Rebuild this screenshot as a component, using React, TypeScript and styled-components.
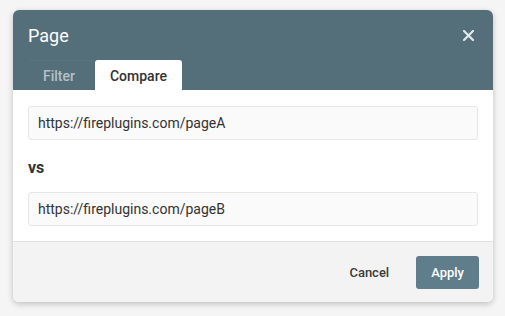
import React from "react";
import styled, { createGlobalStyle } from "styled-components";

const GlobalStyle = createGlobalStyle`
  html, body {
    margin: 0;
    padding: 0;
    background: #f5f5f5;
    font-family: Roboto, "Liberation Sans", sans-serif;
  }
`;

function App() {
  return (
    <>
      <GlobalStyle />
      <Page>
        <Dialog>
          <Header>
            <TitleRow>
              <Title>Page</Title>
              <Close aria-label="close">
                <svg width="11" height="11" viewBox="0 0 11 11">
                  <path
                    d="M1 1 L10 10 M10 1 L1 10"
                    stroke="currentColor"
                    strokeWidth="2.2"
                    strokeLinecap="square"
                  />
                </svg>
              </Close>
            </TitleRow>
            <Tabs>
              <Tab>Filter</Tab>
              <Tab active>Compare</Tab>
            </Tabs>
          </Header>
          <Body>
            <Input defaultValue="https://fireplugins.com/pageA" />
            <Versus>vs</Versus>
            <Input defaultValue="https://fireplugins.com/pageB" />
          </Body>
          <Footer>
            <Button>Cancel</Button>
            <Button primary>Apply</Button>
          </Footer>
        </Dialog>
      </Page>
    </>
  );
}

const Page = styled.div`
  width: 505px;
  height: 316px;
  padding: 10px 0 0 13px;
  box-sizing: border-box;
`;

const Dialog = styled.div`
  width: 480px;
  border-radius: 6px;
  overflow: hidden;
  background: #fff;
  box-shadow: 0 2px 6px rgba(0, 0, 0, 0.22);
`;

const Header = styled.div`
  background: #546e7a;
  padding: 0 15px;
`;

const TitleRow = styled.div`
  height: 50px;
  display: flex;
  align-items: center;
  justify-content: space-between;
`;

const Title = styled.span`
  color: #fff;
  font-size: 18px;
  margin-top: 1px;
`;

const Close = styled.span`
  display: flex;
  color: #e4e9eb;
  margin-right: 4px;
`;

const Tabs = styled.div`
  display: flex;
  height: 30px;
`;

const Tab = styled.div<{ active?: boolean }>`
  display: flex;
  align-items: center;
  padding: ${(p) => (p.active ? "0 15px" : "0 20px 0 15px")};
  font-size: 14px;
  font-weight: 500;
  border-radius: 3px 3px 0 0;
  color: ${(p) => (p.active ? "#333" : "#b4c1c7")};
  background: ${(p) => (p.active ? "#fff" : "transparent")};
  border-top: 1px solid ${(p) => (p.active ? "#fff" : "rgba(255,255,255,0.04)")};
`;

const Body = styled.div`
  padding: 16px 15px 15px;
  display: flex;
  flex-direction: column;
`;

const Input = styled.input`
  height: 34px;
  box-sizing: border-box;
  border: 1px solid #e6e6e6;
  border-radius: 3px;
  background: #fafafa;
  padding: 0 9px;
  font-family: Roboto, "Liberation Sans", sans-serif;
  font-size: 14px;
  color: #333;
  outline: none;
`;

const Versus = styled.div`
  font-size: 16px;
  font-weight: 700;
  color: #333;
  line-height: 20px;
  margin: 18px 0 14px;
`;

const Footer = styled.div`
  background: #f3f3f3;
  border-top: 1px solid #e2e2e2;
  height: 61px;
  box-sizing: border-box;
  display: flex;
  align-items: center;
  justify-content: flex-end;
  padding: 0 14px;
  gap: 12px;
`;

const Button = styled.button<{ primary?: boolean }>`
  height: 33px;
  padding: 0 15px;
  border: none;
  border-radius: 3px;
  font-family: Roboto, "Liberation Sans", sans-serif;
  font-size: 13px;
  font-weight: 500;
  color: ${(p) => (p.primary ? "#fff" : "#3a3a3a")};
  background: ${(p) => (p.primary ? "#607d8b" : "transparent")};
  margin-top: 1px;
`;

export default App;
